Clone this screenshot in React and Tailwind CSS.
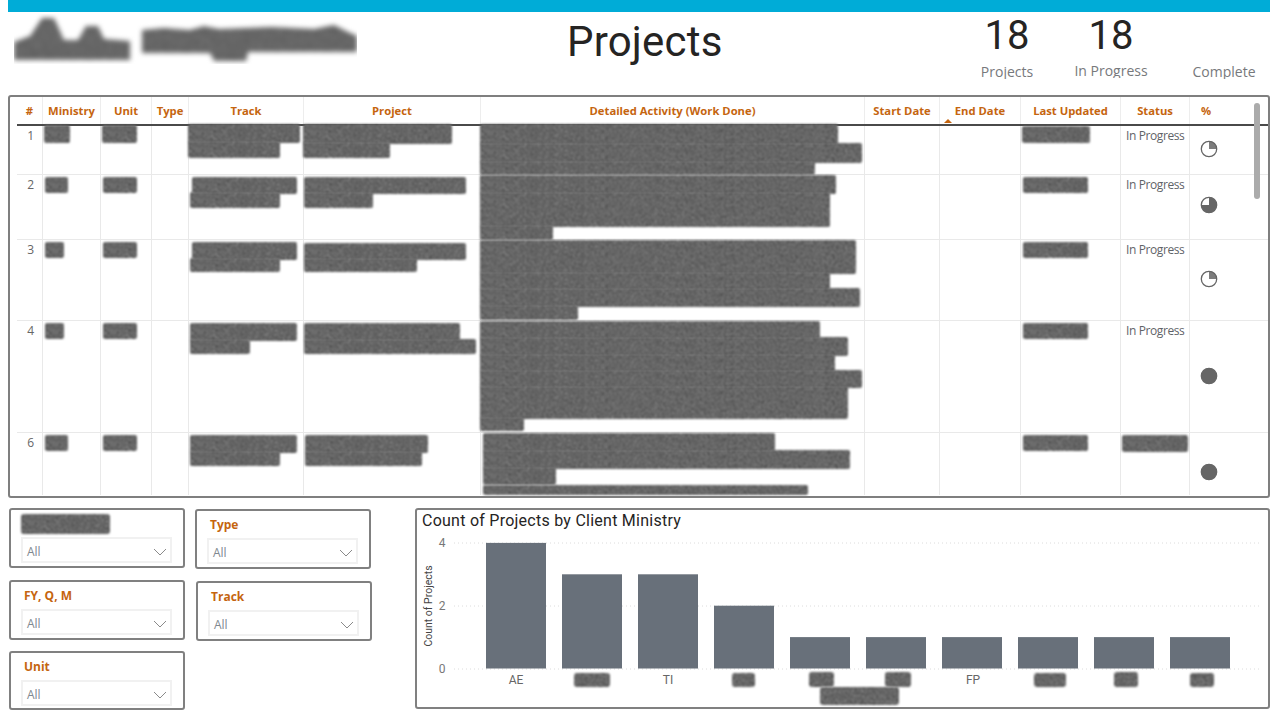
const rows = [
  { top: 126, h: 49, n: "1", status: "In Progress", pie: "q1", pieMt: 14,
    min: [[44,125,70,143]], unit: [[102,125,137,143]],
    track: [[188,124,300,141],[188,141,280,158]],
    project: [[303,124,452,142],[303,142,390,158]],
    det: [[480,124,838,143],[480,143,862,161],[480,161,815,175]],
    last: [[1022,126,1090,143]] },
  { top: 175, h: 65, n: "2", status: "In Progress", pie: "q3", pieMt: 21,
    min: [[45,177,68,193]], unit: [[103,177,137,193]],
    track: [[192,177,297,192],[190,192,280,208]],
    project: [[304,177,466,192],[304,192,373,208]],
    det: [[480,175,836,192],[480,192,830,225],[480,225,553,240]],
    last: [[1023,177,1088,193]] },
  { top: 240, h: 81, n: "3", status: "In Progress", pie: "q1", pieMt: 30,
    min: [[45,242,64,258]], unit: [[103,242,137,258]],
    track: [[192,242,297,258],[190,258,280,272]],
    project: [[304,243,466,258],[304,258,417,272]],
    det: [[480,240,856,272],[480,272,830,288],[480,288,860,305],[480,305,578,320]],
    last: [[1023,242,1088,258]] },
  { top: 321, h: 112, n: "4", status: "In Progress", pie: "full", pieMt: 46,
    min: [[45,323,64,339]], unit: [[103,323,137,339]],
    track: [[190,323,297,339],[190,339,250,354]],
    project: [[304,323,460,339],[304,339,476,354]],
    det: [[480,321,820,337],[480,337,848,354],[480,354,835,370],[480,370,862,386],[480,386,848,417],[480,417,524,431]],
    last: [[1023,323,1088,339]] },
  { top: 433, h: 58, n: "6", statusBlob: [[1122,435,1188,452]], pie: "full", pieMt: 30,
    min: [[45,435,68,451]], unit: [[103,435,137,451]],
    track: [[190,435,297,451],[190,451,280,466]],
    project: [[305,435,428,451],[305,451,422,466]],
    det: [[483,433,775,450],[483,450,850,467],[483,467,556,483],[483,485,808,495]],
    last: [[1023,435,1088,451]] },
];

const headers = [
  "#", "Ministry", "Unit", "Type", "Track", "Project",
  "Detailed Activity (Work Done)", "Start Date", "End Date",
  "Last Updated", "Status", "%",
];

const gridCols = "grid grid-cols-[26px_58px_51px_37px_115px_177px_384px_75px_81px_100px_69px_32px]";
const cellLine = "border-r border-[#e9e9e9]";

function Blobs({ rects = [], cellX, rowY }) {
  let cursor = rowY;
  return rects.map(([x1, y1, x2, y2], i) => {
    const mt = y1 - cursor;
    // Neighbouring strips overlap so that they read as one smudge.
    const overlap = i < rects.length - 1 ? 2 : 0;
    cursor = y2 + overlap;
    return (
      <div
        key={i}
        className="bg-[#666] rounded-[2px] [filter:url(#rd)]"
        style={{ marginLeft: x1 - cellX - 1, marginTop: mt, width: x2 - x1, height: y2 - y1 + overlap }}
      />
    );
  });
}

function Pie({ kind }) {
  return (
    <svg width="18" height="18" viewBox="0 0 18 18" className="block">
      <circle cx="9" cy="9" r="7.7" fill={kind === "full" ? "#666" : "#fff"} stroke="#666" strokeWidth="1.3" />
      {kind === "q1" && <path d="M9 9V1.3A7.7 7.7 0 0 1 16.7 9Z" fill="#666" opacity="0.85" />}
      {kind === "q3" && <path d="M9 9V1.3A7.7 7.7 0 1 1 1.3 9Z" fill="#666" />}
    </svg>
  );
}

function Row({ r, last }) {
  const rowCls = `${gridCols} ${last ? "" : "border-b border-[#e9e9e9]"}`;
  const c = `${cellLine} min-w-0`;
  return (
    <div className={rowCls} style={{ height: r.h }}>
      <div className={`${c} pr-[8px] pt-px text-right text-[12px] leading-[18px] text-[#666]`}>{r.n}</div>
      <div className={c}><Blobs rects={r.min} cellX={42} rowY={r.top} /></div>
      <div className={c}><Blobs rects={r.unit} cellX={100} rowY={r.top} /></div>
      <div className={c} />
      <div className={c}><Blobs rects={r.track} cellX={188} rowY={r.top} /></div>
      <div className={c}><Blobs rects={r.project} cellX={303} rowY={r.top} /></div>
      <div className={c}><Blobs rects={r.det} cellX={480} rowY={r.top} /></div>
      <div className={c} />
      <div className={c} />
      <div className={c}><Blobs rects={r.last} cellX={1020} rowY={r.top} /></div>
      <div className={c}>
        {r.status ? (
          <div className="pl-[5px] text-[12px] leading-[18px] pt-px text-[#5f6368] whitespace-nowrap tracking-[-0.4px]">{r.status}</div>
        ) : (
          <Blobs rects={r.statusBlob} cellX={1120} rowY={r.top} />
        )}
      </div>
      <div className="pl-[10px]" style={{ paddingTop: r.pieMt }}><Pie kind={r.pie} /></div>
    </div>
  );
}

function Chevron() {
  return (
    <svg width="14" height="8" viewBox="0 0 14 8" fill="none" className="block">
      <path d="M1 1l6 6 6-6" stroke="#8a8a8a" strokeWidth="1" />
    </svg>
  );
}

function Slicer({ title, blob, className = "" }) {
  return (
    <div className={`w-[176px] h-[60px] border-2 border-[#808080] rounded-[3px] pl-[10px] ${className}`}>
      {blob ? (
        <div className="h-[27px] pt-[4px]">
          <div className="w-[89px] h-[20px] bg-[#666] rounded-[3px] [filter:url(#rd)]" />
        </div>
      ) : (
        <div className="h-[27px] pl-[3px] pt-[5px] text-[12px] leading-[18px] font-bold text-[#c5650f]">{title}</div>
      )}
      <div className="w-[151px] h-[26px] border-2 border-[#f1f1f1] flex items-center justify-between pl-[4px] pr-[3px] pt-[4px]">
        <span className="text-[12px] leading-[16px] text-[#808890]">All</span>
        <Chevron />
      </div>
    </div>
  );
}

const bars = [
  [486, 4], [562, 3], [638, 3], [714, 2], [790, 1], [866, 1], [942, 1], [1018, 1], [1094, 1], [1170, 1],
];
const labelBlobs = [
  [574,673,610,687],[732,673,755,687],[809,672,834,687],[885,672,911,687],
  [1034,673,1066,687],[1114,672,1138,687],[1190,673,1214,687],
  [820,687,899,705],
];

function Plot() {
  const din = { fontFamily: "Roboto, sans-serif" };
  return (
    <svg width="851" height="175" className="block">
      <g transform="translate(-417 -532)">
        {[543, 606, 669].map((y) => (
          <line key={y} x1="454" x2="1262" y1={y} y2={y} stroke="#dcdcdc" strokeDasharray="1 3" />
        ))}
        {[["4", 547], ["2", 610], ["0", 673]].map(([t, y]) => (
          <text key={t} x="442" y={y} textAnchor="middle" fontSize="12" fill="#777" style={din}>{t}</text>
        ))}
        <text transform="translate(432 606) rotate(-90)" textAnchor="middle" fontSize="10.5" fill="#444" style={din}>Count of Projects</text>
        {bars.map(([x, v]) => {
          const top = 668.5 - v * 31.4;
          return <rect key={x} x={x} y={top} width="60" height={668.5 - top} fill="#68707a" />;
        })}
        {[["AE", 516], ["TI", 668], ["FP", 973]].map(([t, x]) => (
          <text key={t} x={x} y="684" textAnchor="middle" fontSize="12" fill="#666" style={din}>{t}</text>
        ))}
        {labelBlobs.map(([a, b, c, d], i) => (
          <rect key={i} x={a} y={b} width={c - a} height={d - b} rx="3" fill="#666" filter="url(#rd)" />
        ))}
      </g>
    </svg>
  );
}

export default function App() {
  return (
    <div className="w-[1280px] h-[720px] overflow-hidden bg-white font-['Open_Sans',sans-serif]">
      <svg width="0" height="0" className="block h-0">
        <filter id="rd" x="-15%" y="-30%" width="130%" height="160%" colorInterpolationFilters="sRGB">
          <feTurbulence type="fractalNoise" baseFrequency="0.9" numOctaves="2" seed="4" result="n" />
          <feColorMatrix in="n" type="matrix" values="0.7 0 0 0 0.05  0.7 0 0 0 0.05  0.7 0 0 0 0.05  0 0 0 0 1" result="g" />
          <feComposite in="g" in2="SourceGraphic" operator="in" />
          <feGaussianBlur stdDeviation="1.1" />
        </filter>
        <filter id="rdl" x="-5%" y="-20%" width="110%" height="140%" colorInterpolationFilters="sRGB">
          <feTurbulence type="fractalNoise" baseFrequency="0.9" numOctaves="2" seed="9" result="n" />
          <feColorMatrix in="n" type="matrix" values="0.7 0 0 0 0.05  0.7 0 0 0 0.05  0.7 0 0 0 0.05  0 0 0 0 1" result="g" />
          <feComposite in="g" in2="SourceGraphic" operator="in" />
          <feGaussianBlur stdDeviation="2.4" />
        </filter>
      </svg>

      <div className="ml-[8px] w-[1262px] h-[12px] bg-[#00acd7]" />

      <header className="flex h-[83px] pl-[14px]">
        <svg width="343" height="50" className="block mt-[2px] shrink-0">
          <g fill="#666" filter="url(#rdl)">
            <path d="M0 46V28L16 22 28 4 40 4 50 26 64 26 72 12 84 12 90 25 116 27 116 46Z" />
            <path d="M128 16L150 14 176 16 190 12 204 15 232 14 258 13 300 15 320 11 334 18 343 22V38H234L232 47 200 47 196 39H128Z" />
          </g>
        </svg>
        <h1 className="ml-[210px] w-[155px] mt-[5px] h-[50px] text-[42px] leading-[50px] font-normal text-[#252423] whitespace-nowrap font-['Roboto',sans-serif] tracking-[0.2px]">Projects</h1>
        <div className="ml-[250px] w-[70px] flex flex-col items-center">
          <div className="h-[49px] text-[40px] leading-[48px] text-[#252423] font-['Roboto',sans-serif]">18</div>
          <div className="mt-[1px] h-[17px] overflow-hidden text-[14px] leading-[19px] text-[#77797c] whitespace-nowrap">Projects</div>
        </div>
        <div className="ml-[29px] w-[80px] flex flex-col items-center">
          <div className="h-[49px] text-[40px] leading-[48px] text-[#252423] font-['Roboto',sans-serif]">18</div>
          <div className="h-[17px] overflow-hidden text-[14px] leading-[19px] text-[#77797c] whitespace-nowrap">In Progress</div>
        </div>
        <div className="ml-[33px] w-[80px] flex flex-col items-center pt-[50px]">
          <div className="h-[17px] overflow-hidden text-[14px] leading-[19px] text-[#77797c] whitespace-nowrap">Complete</div>
        </div>
      </header>

      <section className="relative ml-[8px] w-[1262px] h-[403px] border-2 border-[#7f7f7f] rounded-[3px] pl-[7px] overflow-hidden">
        <div className={`${gridCols} h-[29px] border-b-2 border-[#4a4a4a]`}>
          {headers.map((t, i) => (
            <div
              key={t}
              className={`relative flex items-center justify-center pt-[1px] text-[11.25px] font-bold text-[#c5650f] whitespace-nowrap ${i < headers.length - 1 ? "border-r border-[#ededed]" : ""}`}
            >
              {t}
              {t === "End Date" && (
                <span className="absolute left-[4px] bottom-[1px] w-0 h-0 border-l-[4px] border-r-[4px] border-b-[4px] border-l-transparent border-r-transparent border-b-[#c5650f]" />
              )}
            </div>
          ))}
        </div>
        {rows.map((r, i) => (
          <Row key={r.n} r={r} last={i === rows.length - 1} />
        ))}
        <div className="absolute left-[1244px] top-[6px] w-[6px] h-[96px] rounded-[3px] bg-[#ababab]" />
      </section>

      <section className="flex mt-[10px] pl-[9px]">
        <div className="flex flex-col w-[176px]">
          <Slicer blob />
          <Slicer title="FY, Q, M" className="mt-[12px]" />
          <Slicer title="Unit" className="mt-[11px] !h-[59px]" />
        </div>
        <div className="ml-[10px] w-[177px] pt-px">
          <Slicer title="Type" />
          <Slicer title="Track" className="mt-[12px] ml-px" />
        </div>
        <div className="ml-[43px] w-[855px] h-[201px] border-2 border-[#808080] rounded-[3px]">
          <div className="h-[22px] pl-[5px] pt-[1px] text-[16px] leading-[20px] text-[#252423] font-['Roboto',sans-serif] tracking-[0.25px]">Count of Projects by Client Ministry</div>
          <Plot />
        </div>
      </section>
    </div>
  );
}
